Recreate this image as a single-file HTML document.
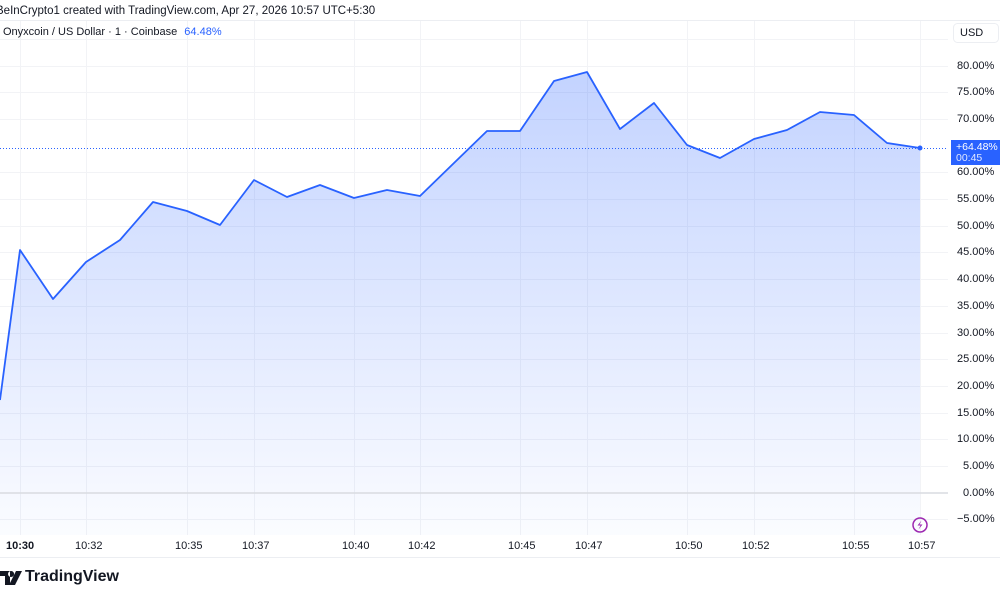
<!DOCTYPE html>
<html><head><meta charset="utf-8"><style>
body{margin:0;width:1000px;height:600px;background:#fff;font-family:"Liberation Sans",sans-serif;overflow:hidden;position:relative}
.t{position:absolute;white-space:nowrap}
</style></head><body>
<svg width="1000" height="600" style="position:absolute;left:0;top:0">
<defs><linearGradient id="g" x1="0" y1="0" x2="0" y2="1"><stop offset="0" stop-color="#2962ff" stop-opacity="0.28"/><stop offset="1" stop-color="#2962ff" stop-opacity="0.02"/></linearGradient></defs>
<line x1="0" y1="20.5" x2="1000" y2="20.5" stroke="#eceef2"/>
<g stroke="#f2f3f6" stroke-width="1">
<line x1="20.5" y1="21" x2="20.5" y2="535"/><line x1="86.5" y1="21" x2="86.5" y2="535"/><line x1="187.5" y1="21" x2="187.5" y2="535"/><line x1="254.5" y1="21" x2="254.5" y2="535"/><line x1="354.5" y1="21" x2="354.5" y2="535"/><line x1="420.5" y1="21" x2="420.5" y2="535"/><line x1="520.5" y1="21" x2="520.5" y2="535"/><line x1="587.5" y1="21" x2="587.5" y2="535"/><line x1="687.5" y1="21" x2="687.5" y2="535"/><line x1="754.5" y1="21" x2="754.5" y2="535"/><line x1="854.5" y1="21" x2="854.5" y2="535"/><line x1="920.5" y1="21" x2="920.5" y2="535"/>
<line x1="0" y1="39.5" x2="948" y2="39.5"/><line x1="0" y1="66.5" x2="948" y2="66.5"/><line x1="0" y1="92.5" x2="948" y2="92.5"/><line x1="0" y1="119.5" x2="948" y2="119.5"/><line x1="0" y1="172.5" x2="948" y2="172.5"/><line x1="0" y1="199.5" x2="948" y2="199.5"/><line x1="0" y1="226.5" x2="948" y2="226.5"/><line x1="0" y1="252.5" x2="948" y2="252.5"/><line x1="0" y1="279.5" x2="948" y2="279.5"/><line x1="0" y1="306.5" x2="948" y2="306.5"/><line x1="0" y1="333.5" x2="948" y2="333.5"/><line x1="0" y1="359.5" x2="948" y2="359.5"/><line x1="0" y1="386.5" x2="948" y2="386.5"/><line x1="0" y1="413.5" x2="948" y2="413.5"/><line x1="0" y1="439.5" x2="948" y2="439.5"/><line x1="0" y1="466.5" x2="948" y2="466.5"/><line x1="0" y1="519.5" x2="948" y2="519.5"/>
</g>
<polygon fill="url(#g)" points="0,400 20,250 53,299 86,262 120,240 153,202 187,211 220,225 254,180 287,197 320,185 354,198 387,190 420,196 454,163 487,131 520,131 554,81 587,72 620,129 654,103 687,145 720,158 754,139 787,130 820,112 854,115 887,143 920,148 920,535 0,535"/>
<line x1="0" y1="493" x2="948" y2="493" stroke="#d9dbe0" stroke-width="1.5"/>
<line x1="0" y1="148.5" x2="948" y2="148.5" stroke="#2962ff" stroke-dasharray="1 2"/>
<polyline fill="none" stroke="#2962ff" stroke-width="1.8" stroke-linejoin="round" points="0,400 20,250 53,299 86,262 120,240 153,202 187,211 220,225 254,180 287,197 320,185 354,198 387,190 420,196 454,163 487,131 520,131 554,81 587,72 620,129 654,103 687,145 720,158 754,139 787,130 820,112 854,115 887,143 920,148"/>
<circle cx="920" cy="148" r="2.5" fill="#2962ff"/>
<line x1="0" y1="557.5" x2="1000" y2="557.5" stroke="#eceef2"/>
<rect x="953.5" y="23.5" width="45" height="19" rx="4" fill="#fff" stroke="#eceef2"/>
<rect x="951" y="140" width="49" height="25" fill="#2962ff"/>
<circle cx="920" cy="525" r="7" fill="none" stroke="#9c27b0" stroke-width="1.5"/>
<path d="M921.5 520.5 L917.5 525.5 L920.5 525.5 L918.5 529.5 L922.5 524.5 L919.5 524.5 Z" fill="#9c27b0"/>
<path d="M0 571 H10 V585 H5 V576 H0 Z M11 571 a3 3 0 1 0 0.1 0 Z M16 571 H22 L15 585 H9 Z" fill="#131722"/>
</svg>
<div class="t" style="left:-4px;top:5px;font-size:11.5px;color:#131722">BeInCrypto1 created with TradingView.com, Apr 27, 2026 10:57 UTC+5:30</div>
<div class="t" style="left:3px;top:26px;font-size:11px;color:#131722">Onyxcoin / US Dollar · 1 · Coinbase <span style="color:#2962ff;margin-left:4px">64.48%</span></div>
<div class="t" style="left:960px;top:27px;font-size:11px;color:#131722">USD</div>
<div style="position:absolute;left:957px;top:0;font-size:11px;color:#131722;line-height:12px">
<div class="t" style="top:60px">80.00%</div><div class="t" style="top:86px">75.00%</div><div class="t" style="top:113px">70.00%</div><div class="t" style="top:166px">60.00%</div><div class="t" style="top:193px">55.00%</div><div class="t" style="top:220px">50.00%</div><div class="t" style="top:246px">45.00%</div><div class="t" style="top:273px">40.00%</div><div class="t" style="top:300px">35.00%</div><div class="t" style="top:327px">30.00%</div><div class="t" style="top:353px">25.00%</div><div class="t" style="top:380px">20.00%</div><div class="t" style="top:407px">15.00%</div><div class="t" style="top:433px">10.00%</div><div class="t" style="top:460px;left:6px">5.00%</div><div class="t" style="top:487px;left:6px">0.00%</div><div class="t" style="top:513px">−5.00%</div>
</div>
<div class="t" style="left:956px;top:142px;font-size:10.5px;color:#fff;line-height:11px">+64.48%<br><span style="opacity:.85">00:45</span></div>
<div style="font-size:11px;color:#131722">
<div class="t" style="left:6px;top:540px;font-weight:bold">10:30</div><div class="t" style="left:75px;top:540px">10:32</div><div class="t" style="left:175px;top:540px">10:35</div><div class="t" style="left:242px;top:540px">10:37</div><div class="t" style="left:342px;top:540px">10:40</div><div class="t" style="left:408px;top:540px">10:42</div><div class="t" style="left:508px;top:540px">10:45</div><div class="t" style="left:575px;top:540px">10:47</div><div class="t" style="left:675px;top:540px">10:50</div><div class="t" style="left:742px;top:540px">10:52</div><div class="t" style="left:842px;top:540px">10:55</div><div class="t" style="left:908px;top:540px">10:57</div>
</div>
<div class="t" style="left:25px;top:568px;font-size:16px;font-weight:bold;color:#131722">TradingView</div>
</body></html>
